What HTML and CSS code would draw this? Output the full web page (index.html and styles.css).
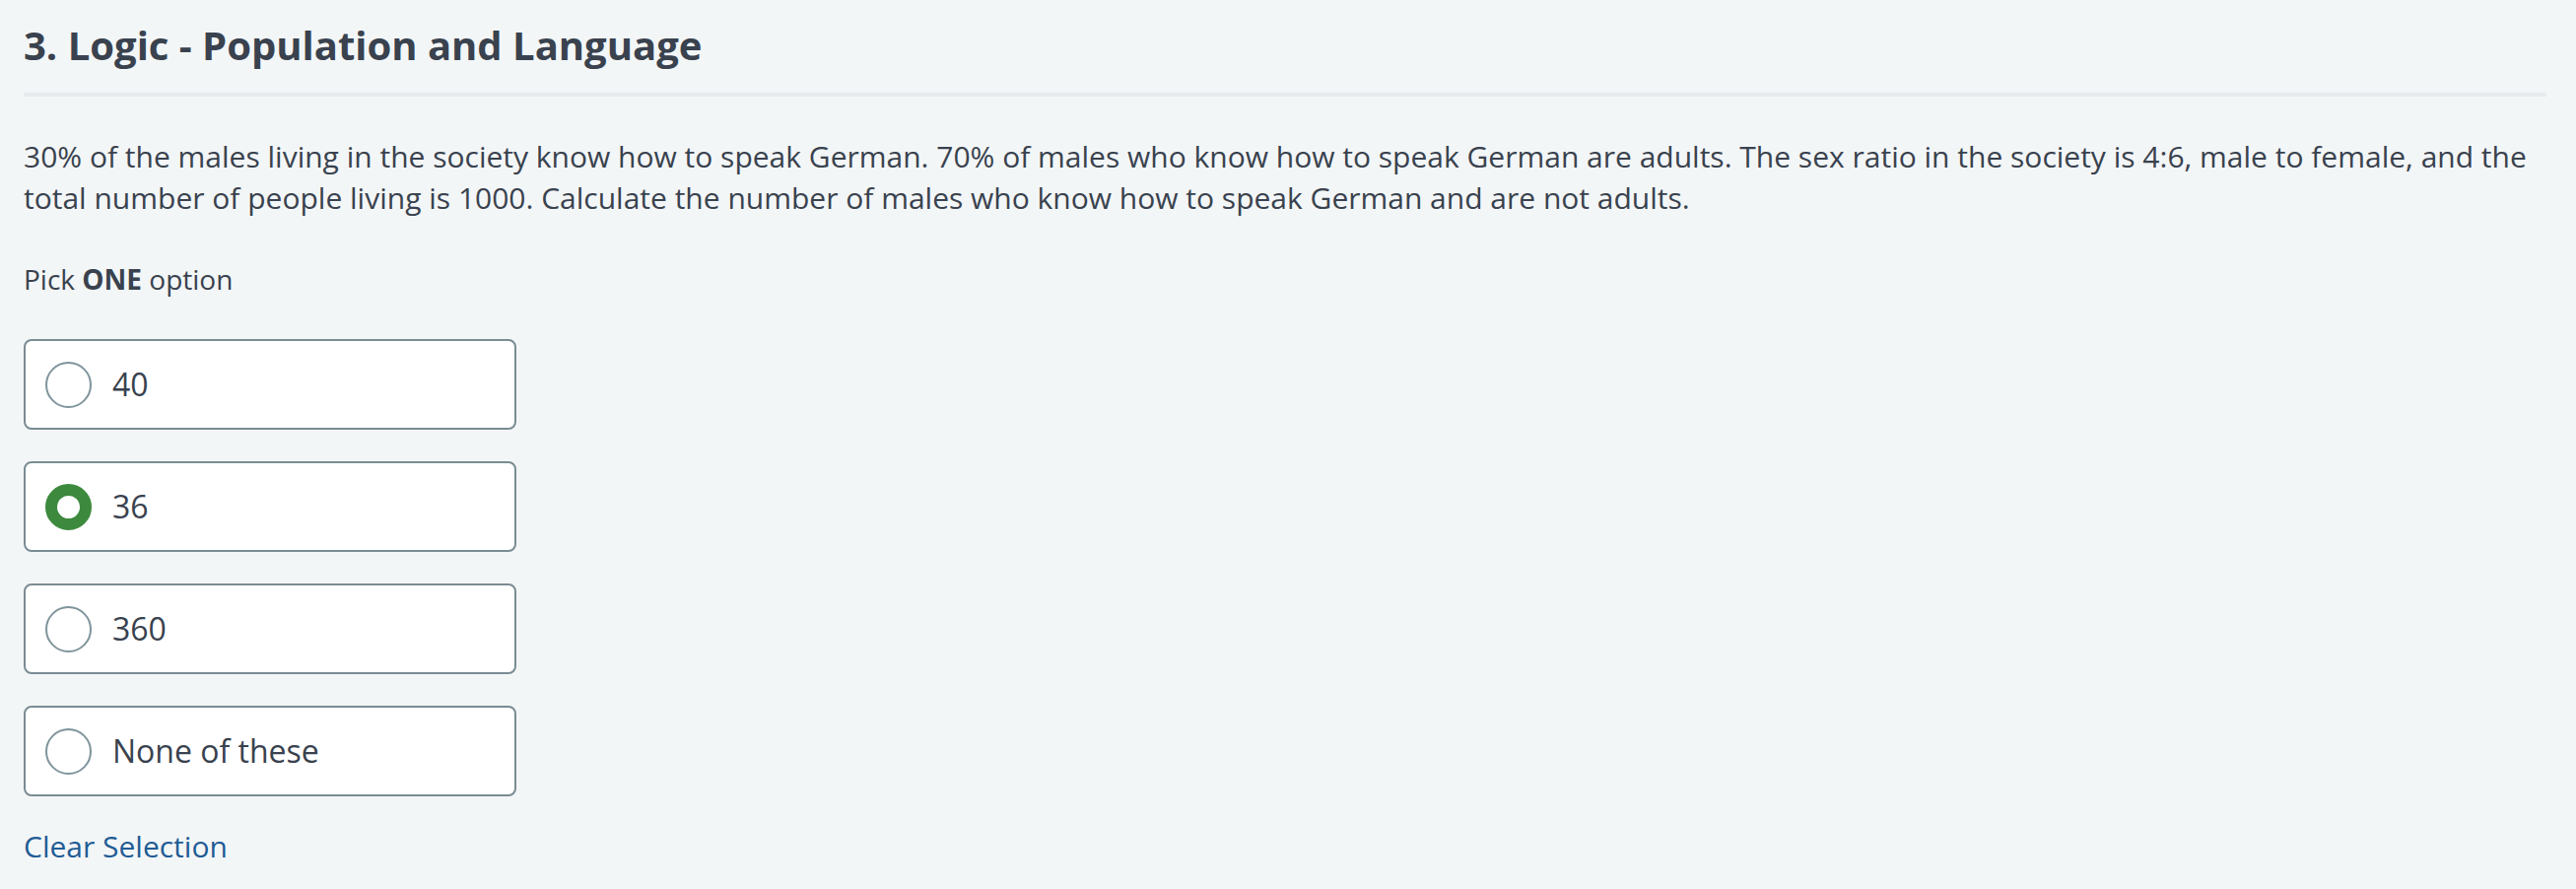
FILE: index.html
```html
<!DOCTYPE html>
<html lang="en">
<head>
<meta charset="utf-8">
<title>3. Logic - Population and Language</title>
<link rel="stylesheet" href="styles.css">
</head>
<body>
<main class="question">
  <h1 class="question-title">3. Logic - Population and Language</h1>
  <p class="question-body">30% of the males living in the society know how to speak German. 70% of males who know how to speak German are adults. The sex ratio in the society is 4:6, male to female, and the total number of people living is 1000. Calculate the number of males who know how to speak German and are not adults.</p>
  <p class="pick">Pick <strong>ONE</strong> option</p>
  <div class="options">
    <label class="option"><span class="radio"></span><span class="option-label">40</span></label>
    <label class="option"><span class="radio radio-checked"></span><span class="option-label">36</span></label>
    <label class="option"><span class="radio"></span><span class="option-label">360</span></label>
    <label class="option"><span class="radio"></span><span class="option-label">None of these</span></label>
  </div>
  <a class="clear-link" href="#">Clear Selection</a>
</main>
</body>
</html>
```
FILE: styles.css
```css
html, body {
  margin: 0;
  padding: 0;
  background: #f3f6f7;
}
body {
  font-family: "Open Sans", "Noto Sans", sans-serif;
  color: #39424e;
}
.question {
  padding: 21px 30px 0 24px;
  display: flex;
  flex-direction: column;
  align-items: flex-start;
}
.question-title {
  align-self: stretch;
  margin: 0;
  font-size: 40px;
  line-height: 50px;
  font-weight: 700;
  padding-bottom: 23px;
  border-bottom: 4px solid #e7ebed;
}
.question-body {
  margin: 40px 0 0;
  font-size: 30px;
  line-height: 42px;
}
.pick {
  margin: 40px 0 0;
  font-size: 28px;
  line-height: 42px;
}
.pick strong {
  font-weight: 700;
}
.options {
  margin-top: 40px;
  display: flex;
  flex-direction: column;
  gap: 32px;
}
.option {
  box-sizing: border-box;
  width: 500px;
  height: 92px;
  border: 2px solid #7a8c93;
  border-radius: 8px;
  background: #ffffff;
  display: flex;
  align-items: center;
  padding: 0 20px;
  gap: 21px;
  cursor: pointer;
}
.radio {
  box-sizing: border-box;
  width: 47px;
  height: 47px;
  border-radius: 50%;
  border: 2px solid #7f949b;
  background: #fff;
  flex: none;
}
.radio-checked {
  border: 12px solid #3d8a3e;
}
.option-label {
  font-size: 32px;
  line-height: 44px;
}
.clear-link {
  margin-top: 28px;
  font-size: 30px;
  line-height: 45px;
  color: #1f5c95;
  text-decoration: none;
}
```
